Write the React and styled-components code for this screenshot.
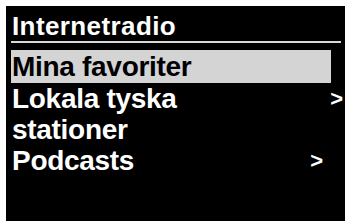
import React from "react";
import styled, { createGlobalStyle } from "styled-components";

const Global = createGlobalStyle`
  html, body { margin: 0; padding: 0; background: #fff; overflow: hidden; }
  body { font-family: "Liberation Sans", Arial, sans-serif; }
`;

const Frame = styled.div`
  width: 345px;
  height: 224px;
  padding: 6px 0 3px 6px;
  box-sizing: border-box;
  overflow: hidden;
`;

const Screen = styled.div`
  width: 345px;
  height: 215px;
  background: #000;
  padding: 0 0 0 5px;
  box-sizing: border-box;
  display: flex;
  flex-direction: column;
`;

const Title = styled.div`
  color: #fff;
  font-size: 26px;
  font-weight: bold;
  letter-spacing: 0.4px;
  line-height: 29px;
  height: 29px;
  padding-left: 1px;
  padding-top: 6px;
  border-bottom: 2px solid #d8d8d8;
  width: 329px;
`;

const List = styled.div`
  display: flex;
  flex-direction: column;
  margin-top: 7px;
`;

const Row = styled.div`
  display: flex;
  align-items: center;
  justify-content: space-between;
  height: ${(p) => p.$h || 31}px;
  line-height: ${(p) => p.$h || 31}px;
  width: ${(p) => (p.$selected ? 320 : 340)}px;
  background: ${(p) => (p.$selected ? "#d4d4d4" : "transparent")};
  color: ${(p) => (p.$selected ? "#000" : "#fff")};
  font-size: 28px;
  font-weight: bold;
  letter-spacing: -0.3px;
  padding-left: 1px;
  box-sizing: border-box;
`;

const Arrow = styled.span`
  font-size: 22px;
  font-weight: bold;
  letter-spacing: 0;
  margin-right: ${(p) => p.$mr}px;
`;

export default function App() {
  return (
    <>
      <Global />
      <Frame>
        <Screen>
          <Title>Internetradio</Title>
          <List>
            <Row $selected $h={33}>Mina favoriter</Row>
            <Row>
              Lokala tyska<Arrow $mr={8}>&gt;</Arrow>
            </Row>
            <Row>stationer</Row>
            <Row>
              Podcasts<Arrow $mr={28}>&gt;</Arrow>
            </Row>
          </List>
        </Screen>
      </Frame>
    </>
  );
}
